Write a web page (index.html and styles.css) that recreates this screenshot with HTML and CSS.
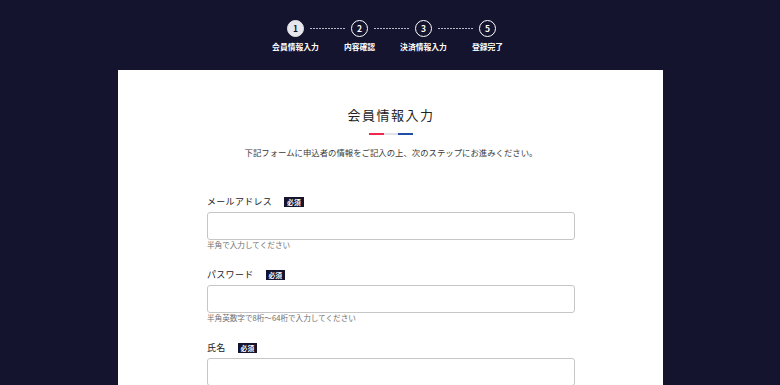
FILE: index.html
```html
<!DOCTYPE html>
<html lang="ja">
<head>
<meta charset="utf-8">
<title>会員情報入力</title>
<link rel="stylesheet" href="styles.css">
</head>
<body>
<header class="header">
  <div class="steps">
    <div class="step-track">
      <span class="circle circle-active">1</span>
      <span class="dots"></span>
      <span class="circle">2</span>
      <span class="dots"></span>
      <span class="circle">3</span>
      <span class="dots"></span>
      <span class="circle">5</span>
    </div>
    <div class="step-labels">
      <span class="step-label">会員情報入力</span>
      <span class="step-label">内容確認</span>
      <span class="step-label">決済情報入力</span>
      <span class="step-label">登録完了</span>
    </div>
  </div>
</header>
<main class="card">
  <h1 class="title">会員情報入力</h1>
  <div class="tricolor"><span class="tc-red"></span><span class="tc-gray"></span><span class="tc-blue"></span></div>
  <p class="lead">下記フォームに申込者の情報をご記入の上、次のステップにお進みください。</p>
  <form class="form">
    <div class="field">
      <div class="label-row"><span class="label">メールアドレス</span><span class="badge">必須</span></div>
      <input class="input" type="text">
      <p class="hint">半角で入力してください</p>
    </div>
    <div class="field">
      <div class="label-row"><span class="label">パスワード</span><span class="badge">必須</span></div>
      <input class="input" type="password">
      <p class="hint">半角英数字で8桁〜64桁で入力してください</p>
    </div>
    <div class="field">
      <div class="label-row"><span class="label">氏名</span><span class="badge">必須</span></div>
      <input class="input" type="text">
    </div>
  </form>
</main>
</body>
</html>
```

FILE: styles.css
```css
* { box-sizing: border-box; }
html, body { margin: 0; padding: 0; }
body {
  background: #15142f;
  font-family: "Noto Sans CJK JP", "Noto Sans", sans-serif;
  color: #222;
  overflow: hidden;
}
.header {
  height: 70px;
  padding-top: 20px;
  display: flex;
  justify-content: center;
}
.steps {
  width: 256px;
  margin-left: 3px;
}
.step-track {
  display: flex;
  align-items: center;
  padding: 0 23.5px;
}
.circle {
  width: 17px;
  height: 17px;
  flex: 0 0 17px;
  border-radius: 50%;
  border: 1.5px solid #fff;
  color: #fff;
  font-size: 8.5px;
  font-weight: 700;
  display: flex;
  align-items: center;
  justify-content: center;
  line-height: 1;
}
.circle-active {
  background: #e6e6ec;
  border-color: #e6e6ec;
  color: #15142f;
}
.dots {
  flex: 1;
  height: 1px;
  margin: 0 5px 0 6px;
  background: repeating-linear-gradient(to right, #b9b9c6 0 2px, transparent 2px 3px);
}
.step-labels {
  display: flex;
  margin-top: 5px;
}
.step-label {
  width: 64px;
  text-align: center;
  white-space: nowrap;
  color: #fff;
  font-size: 7.8px;
  font-weight: 700;
  line-height: 10px;
}
.card {
  width: 545px;
  margin: 0 auto;
  background: #fff;
  padding-top: 35px;
  padding-left: 2px;
  min-height: 400px;
}
.title {
  margin: 0;
  text-align: center;
  font-size: 13px;
  font-weight: 400;
  letter-spacing: 1.5px;
  line-height: 20px;
  color: #222;
}
.tricolor {
  display: flex;
  justify-content: center;
  margin-top: 8px;
  height: 2px;
}
.tricolor span { width: 14.5px; height: 2px; }
.tc-red { background: #f0284f; }
.tc-gray { background: #e2e2e8; }
.tc-blue { background: #1d4fa6; }
.lead {
  margin: 11px 0 0;
  text-align: center;
  font-size: 8.4px;
  line-height: 12px;
  color: #3a3a3a;
}
.form {
  width: 368px;
  margin: 38px auto 0;
}
.field { margin-bottom: 19px; }
.label-row {
  display: flex;
  align-items: center;
  height: 12px;
}
.label {
  font-size: 9px;
  letter-spacing: 0.3px;
  line-height: 12px;
  color: #222;
}
.badge {
  margin-left: 12px;
  background: #15142f;
  color: #fff;
  font-size: 6.8px;
  font-weight: 700;
  line-height: 10px;
  padding: 0 3px;
}
.input {
  display: block;
  width: 100%;
  height: 28px;
  margin: 4px 0 0;
  border: 1px solid #c6c6c6;
  border-radius: 3px;
  background: #fff;
  padding: 0 8px;
  font: inherit;
}
.hint {
  margin: 0;
  font-size: 7.6px;
  line-height: 10px;
  color: #6e6e6e;
}
```
